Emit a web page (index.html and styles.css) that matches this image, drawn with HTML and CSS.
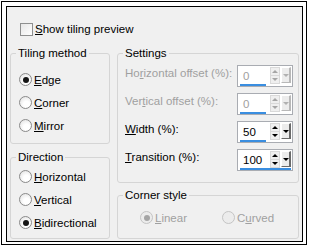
FILE: index.html
```html
<!DOCTYPE html>
<html lang="en">
<head>
  <meta charset="UTF-8">
  <title>Tiling options</title>
  <link rel="stylesheet" href="styles.css">
</head>
<body>

<div class="frame">
  <div class="panel">

    <div class="check-row">
      <span class="checkbox"></span>
      <span><u>S</u>how tiling preview</span>
    </div>

    <div class="groups">
      <div class="col">
        <fieldset class="group tiling">
          <legend>Tiling method</legend>
          <div class="body">
            <div class="radio"><span class="circle on"></span><span><u>E</u>dge</span></div>
            <div class="radio"><span class="circle"></span><span><u>C</u>orner</span></div>
            <div class="radio"><span class="circle"></span><span><u>M</u>irror</span></div>
          </div>
        </fieldset>

        <fieldset class="group direction">
          <legend>Direction</legend>
          <div class="body">
            <div class="radio"><span class="circle"></span><span><u>H</u>orizontal</span></div>
            <div class="radio"><span class="circle"></span><span><u>V</u>ertical</span></div>
            <div class="radio"><span class="circle on"></span><span><u>B</u>idirectional</span></div>
          </div>
        </fieldset>
      </div>

      <div class="col">
        <fieldset class="group settings">
          <legend>Settings</legend>
          <div class="body">
            <div class="row off">
              <span class="label">Ho<u>r</u>izontal offset (%):</span>
              <div class="spin">
                <div class="spin-top">
                  <span class="val">0</span>
                  <span class="arrows"><i class="up"></i><i class="down"></i></span>
                  <span class="drop"><i></i></span>
                </div>
                <div class="track"><span class="fill" style="width:50%"></span></div>
              </div>
            </div>
            <div class="row off">
              <span class="label">Ver<u>t</u>ical offset (%):</span>
              <div class="spin">
                <div class="spin-top">
                  <span class="val">0</span>
                  <span class="arrows"><i class="up"></i><i class="down"></i></span>
                  <span class="drop"><i></i></span>
                </div>
                <div class="track"><span class="fill" style="width:50%"></span></div>
              </div>
            </div>
            <div class="row">
              <span class="label"><u>W</u>idth (%):</span>
              <div class="spin">
                <div class="spin-top">
                  <span class="val">50</span>
                  <span class="arrows"><i class="up"></i><i class="down"></i></span>
                  <span class="drop"><i></i></span>
                </div>
                <div class="track"><span class="fill" style="width:50%"></span></div>
              </div>
            </div>
            <div class="row">
              <span class="label"><u>T</u>ransition (%):</span>
              <div class="spin">
                <div class="spin-top">
                  <span class="val">100</span>
                  <span class="arrows"><i class="up"></i><i class="down"></i></span>
                  <span class="drop"><i></i></span>
                </div>
                <div class="track"><span class="fill" style="width:100%"></span></div>
              </div>
            </div>
          </div>
        </fieldset>

        <fieldset class="group corner">
          <legend>Corner style</legend>
          <div class="body">
            <div class="radio off linear"><span class="circle on"></span><span><u>L</u>inear</span></div>
            <div class="radio off"><span class="circle"></span><span>C<u>u</u>rved</span></div>
          </div>
        </fieldset>
      </div>
    </div>

  </div>
</div>

</body>
</html>
```

FILE: styles.css
```css
body {
  margin: 0;
  background: #fff;
  font-family: "Liberation Sans", Arial, sans-serif;
  font-size: 11.5px;
  line-height: 14px;
  color: #000;
}
u {
  text-decoration: underline;
  text-underline-offset: 1px;
}
.frame {
  box-sizing: border-box;
  width: 306px;
  height: 244px;
  margin: 1px 0 0 1px;
  border: 1px solid #000;
  padding: 4px 0 0 4px;
}
.panel {
  box-sizing: border-box;
  width: 297px;
  height: 236px;
  border: 1px solid #000;
  background: #f0f0f0;
}
.check-row {
  display: flex;
  align-items: center;
  gap: 2px;
  height: 14px;
  margin: 15px 0 0 13px;
}
.checkbox {
  box-sizing: border-box;
  width: 13px;
  height: 13px;
  border: 1px solid #8e8f8f;
  background: linear-gradient(135deg, #e6e6e6, #fff);
}
.groups {
  display: grid;
  grid-template-columns: 100px 182px;
  column-gap: 7px;
  margin: 10px 0 0 3px;
}
.col {
  display: flex;
  flex-direction: column;
}
.group {
  box-sizing: border-box;
  margin: 0;
  padding: 0;
  min-width: 0;
  border: 1px solid #d5d5d5;
  border-radius: 3px;
}
.group legend {
  margin-left: 5px;
  padding: 0 2px;
  line-height: 14px;
}
.tiling { height: 98px; }
.direction { height: 89px; margin-top: 6px; }
.settings { height: 137px; }
.corner { height: 51px; margin-top: 5px; }

.tiling .body { padding: 8px 0 0 8px; }
.direction .body { padding: 1px 0 0 8px; }
.settings .body { padding: 5px 5px 0 7px; }
.corner .body {
  display: flex;
  padding: 4px 0 0 22px;
}

.radio {
  display: flex;
  align-items: center;
  gap: 2px;
  height: 23px;
}
.linear { width: 82px; }
.circle {
  box-sizing: border-box;
  width: 13px;
  height: 13px;
  border: 1px solid #8a8a8a;
  border-radius: 50%;
  background: radial-gradient(circle at 60% 65%, #fff 30%, #dcdcdc 100%);
  display: flex;
  align-items: center;
  justify-content: center;
}
.circle.on::after {
  content: "";
  width: 6px;
  height: 6px;
  border-radius: 50%;
  background: #151515;
}
.off { color: #a0a0a0; }
.off .circle {
  border-color: #c4c4c4;
  background: #ececec;
}
.off .circle.on::after { background: #a5a5a5; }

.row {
  display: flex;
  justify-content: space-between;
  height: 28px;
}
.label { padding-top: 1px; }
.spin {
  box-sizing: border-box;
  width: 56px;
  height: 22px;
  border: 1px solid #a9acb2;
  background: #fff;
  display: flex;
  flex-direction: column;
}
.spin-top {
  display: flex;
  height: 17px;
}
.val {
  flex: 1;
  padding: 3px 0 0 5px;
  line-height: 14px;
  color: #000;
}
.off .val { color: #a0a0a0; }
.arrows {
  display: flex;
  flex-direction: column;
  width: 10px;
  margin: 1px 1px 0 0;
}
.arrows i {
  flex: 1;
  display: flex;
  align-items: center;
  justify-content: center;
  background: #efefef;
  border: 1px solid #d9d9d9;
  margin-bottom: -1px;
}
.arrows i::after {
  content: "";
  border-left: 3px solid transparent;
  border-right: 3px solid transparent;
}
.arrows .up::after { border-bottom: 3px solid #000; }
.arrows .down::after { border-top: 3px solid #000; }
.off .arrows .up::after { border-bottom-color: #a5a5a5; }
.off .arrows .down::after { border-top-color: #a5a5a5; }
.drop {
  box-sizing: border-box;
  width: 10px;
  margin: 1px 1px 0 0;
  border: 1px solid #fff;
  border-right: 2px solid #6a6a6a;
  border-bottom-color: #6a6a6a;
  background: #ececec;
  display: flex;
  align-items: center;
  justify-content: center;
}
.drop i {
  border-left: 3px solid transparent;
  border-right: 3px solid transparent;
  border-top: 3px solid #000;
}
.off .drop { border-right-color: #b8b8b8; border-bottom-color: #b8b8b8; }
.off .drop i { border-top-color: #b0b0b0; }
.track {
  height: 3px;
  margin: 1px 1px 0 2px;
}
.fill {
  display: block;
  height: 100%;
  background: #3a8ee0;
}
```
